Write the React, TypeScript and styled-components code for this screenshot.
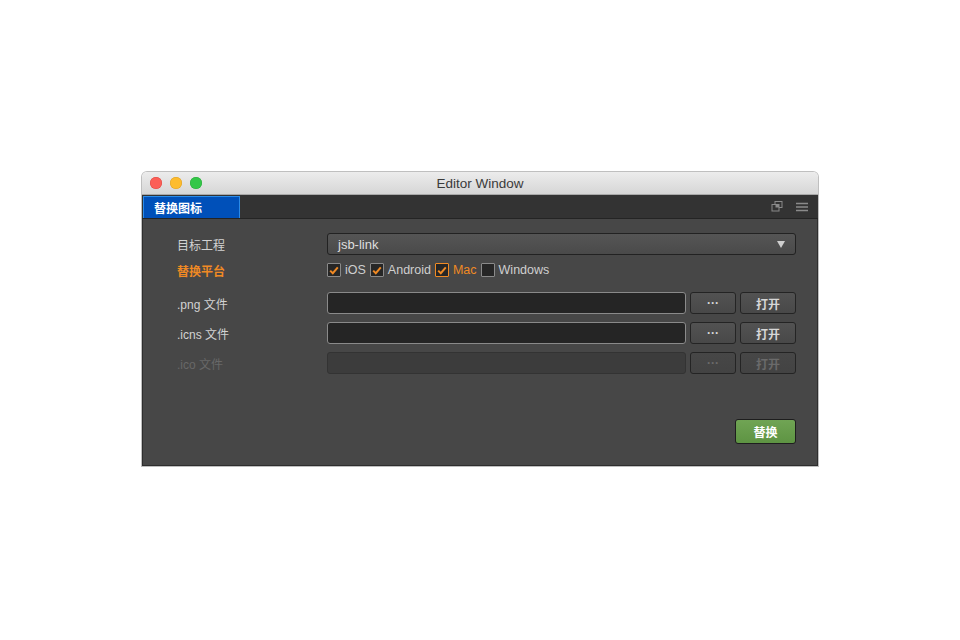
import React from "react";
import styled, { createGlobalStyle } from "styled-components";

const GlobalStyle = createGlobalStyle`
  html, body {
    margin: 0;
    padding: 0;
    background: #ffffff;
    font-family: "Liberation Sans", "Noto Sans CJK SC", sans-serif;
  }
`;

const Page = styled.div`
  width: 960px;
  height: 640px;
  display: flex;
  justify-content: center;
  padding-top: 172px;
  box-sizing: border-box;
`;

const Window = styled.div`
  width: 676px;
  height: 294px;
  display: flex;
  flex-direction: column;
  border-radius: 5px 5px 0 0;
  overflow: hidden;
  box-shadow: 0 0 0 1px rgba(0, 0, 0, 0.25);
`;

const TitleBar = styled.div`
  height: 22px;
  position: relative;
  display: flex;
  align-items: center;
  justify-content: center;
  background: linear-gradient(#ececec, #d6d6d6);
  border-bottom: 1px solid #a9a9a9;
  font-size: 13.5px;
  color: #3a3a3a;
`;

const Lights = styled.div`
  position: absolute;
  left: 8px;
  top: 5px;
  display: flex;
  gap: 8px;
`;

const Light = styled.span<{ $c: string; $b: string }>`
  width: 12px;
  height: 12px;
  border-radius: 50%;
  background: ${(p) => p.$c};
  box-shadow: inset 0 0 0 0.5px ${(p) => p.$b};
`;

const TabBar = styled.div`
  height: 23px;
  display: flex;
  align-items: stretch;
  background: #333333;
  border-bottom: 1px solid #242424;
`;

const Tab = styled.div`
  width: 97px;
  margin: 1px 0 0 1px;
  display: flex;
  align-items: center;
  padding-left: 10px;
  box-sizing: border-box;
  background: #0050b9;
  border: 1px solid #2a8be8;
  border-bottom: none;
  color: #ffffff;
  font-size: 12px;
  font-weight: bold;
`;

const TabTools = styled.div`
  margin-left: auto;
  display: flex;
  align-items: center;
  gap: 13px;
  padding-right: 10px;
`;

const Body = styled.div`
  flex: 1;
  background: #474747;
  border-left: 1px solid #2e2e2e;
  border-right: 1px solid #2e2e2e;
  border-bottom: 1px solid #2e2e2e;
  padding: 14px 21px 21px 34px;
  display: flex;
  flex-direction: column;
`;

const Row = styled.div<{ $mt?: number }>`
  display: grid;
  grid-template-columns: 150px 1fr;
  align-items: center;
  height: 22px;
  margin-top: ${(p) => p.$mt ?? 0}px;
`;

const Label = styled.div<{ $tone?: "normal" | "accent" | "disabled" }>`
  font-size: 12px;
  color: ${(p) =>
    p.$tone === "accent" ? "#f08a24" : p.$tone === "disabled" ? "#686868" : "#d2d2d2"};
  font-weight: ${(p) => (p.$tone === "accent" ? "bold" : "normal")};
`;

const Select = styled.div`
  height: 22px;
  box-sizing: border-box;
  display: flex;
  align-items: center;
  padding: 0 10px;
  border: 1px solid #222;
  border-radius: 3px;
  background: linear-gradient(#555555, #4a4a4a);
  color: #dedede;
  font-size: 13px;
`;

const Caret = styled.span`
  margin-left: auto;
  width: 0;
  height: 0;
  border-left: 4px solid transparent;
  border-right: 4px solid transparent;
  border-top: 7px solid #cfcfcf;
`;

const Checks = styled.div`
  display: flex;
  align-items: center;
  gap: 4px;
  font-size: 12.5px;
`;

const Box = styled.span<{ $accent?: boolean }>`
  width: 14px;
  height: 14px;
  box-sizing: border-box;
  border: 1px solid ${(p) => (p.$accent ? "#f08a24" : "#8a8a8a")};
  background: #262626;
  display: flex;
  align-items: center;
  justify-content: center;
  border-radius: 1px;
`;

const CheckText = styled.span<{ $accent?: boolean }>`
  color: ${(p) => (p.$accent ? "#f08a24" : "#cfcfcf")};
`;

const FileControls = styled.div`
  display: flex;
  gap: 4px;
  height: 22px;
`;

const Input = styled.div<{ $disabled?: boolean }>`
  flex: 1;
  box-sizing: border-box;
  border: 1px solid ${(p) => (p.$disabled ? "#333" : "#8a8a8a")};
  border-radius: 3px;
  background: ${(p) => (p.$disabled ? "#3c3c3c" : "#252525")};
`;

const Button = styled.div<{ $w: number; $disabled?: boolean }>`
  width: ${(p) => p.$w}px;
  box-sizing: border-box;
  display: flex;
  align-items: center;
  justify-content: center;
  border: 1px solid #242424;
  border-radius: 3px;
  background: ${(p) =>
    p.$disabled ? "linear-gradient(#474747, #434343)" : "linear-gradient(#525252, #484848)"};
  color: ${(p) => (p.$disabled ? "#6a6a6a" : "#d6d6d6")};
  font-size: 12px;
  font-weight: bold;
`;

const Footer = styled.div`
  margin-top: auto;
  display: flex;
  justify-content: flex-end;
`;

const PrimaryButton = styled.div`
  width: 61px;
  height: 25px;
  box-sizing: border-box;
  display: flex;
  align-items: center;
  justify-content: center;
  border: 1px solid #1e1e1e;
  border-radius: 3px;
  background: linear-gradient(#70a454, #5e9443);
  color: #ffffff;
  font-size: 12px;
  font-weight: bold;
`;

const Tick: React.FC = () => (
  <svg width="10" height="9" viewBox="0 0 10 9">
    <path d="M1.2 4.6 L3.8 7.2 L8.8 1.4" fill="none" stroke="#f08a24" strokeWidth="2" />
  </svg>
);

const platforms = [
  { name: "iOS", checked: true },
  { name: "Android", checked: true },
  { name: "Mac", checked: true, accent: true },
  { name: "Windows", checked: false },
];

const files = [
  { label: ".png 文件", mt: 11 },
  { label: ".icns 文件", mt: 8 },
  { label: ".ico 文件", mt: 8, disabled: true },
];

const App: React.FC = () => (
  <>
    <GlobalStyle />
    <Page>
      <Window>
        <TitleBar>
          <Lights>
            <Light $c="#fc5f57" $b="#de4640" />
            <Light $c="#fdbc2e" $b="#dd9f22" />
            <Light $c="#33c748" $b="#27a938" />
          </Lights>
          Editor Window
        </TitleBar>
        <TabBar>
          <Tab>替换图标</Tab>
          <TabTools>
            <svg width="12" height="11" viewBox="0 0 12 11">
              <rect x="4" y="0.5" width="7" height="6" fill="none" stroke="#8a8a8a" />
              <rect x="1" y="3.5" width="7" height="6.5" fill="#333" stroke="#8a8a8a" />
              <rect x="4.5" y="3.5" width="3.5" height="3" fill="#8a8a8a" />
            </svg>
            <svg width="12" height="10" viewBox="0 0 12 10">
              <path d="M0 1.5 H12 M0 5 H12 M0 8.5 H12" stroke="#8a8a8a" strokeWidth="1.4" />
            </svg>
          </TabTools>
        </TabBar>
        <Body>
          <Row>
            <Label>目标工程</Label>
            <Select>
              jsb-link
              <Caret />
            </Select>
          </Row>
          <Row $mt={4}>
            <Label $tone="accent">替换平台</Label>
            <Checks>
              {platforms.map((p) => (
                <React.Fragment key={p.name}>
                  <Box $accent={p.accent}>{p.checked && <Tick />}</Box>
                  <CheckText $accent={p.accent}>{p.name}</CheckText>
                </React.Fragment>
              ))}
            </Checks>
          </Row>
          {files.map((f) => (
            <Row key={f.label} $mt={f.mt}>
              <Label $tone={f.disabled ? "disabled" : "normal"}>{f.label}</Label>
              <FileControls>
                <Input $disabled={f.disabled} />
                <Button $w={46} $disabled={f.disabled}>···</Button>
                <Button $w={56} $disabled={f.disabled}>打开</Button>
              </FileControls>
            </Row>
          ))}
          <Footer>
            <PrimaryButton>替换</PrimaryButton>
          </Footer>
        </Body>
      </Window>
    </Page>
  </>
);

export default App;
